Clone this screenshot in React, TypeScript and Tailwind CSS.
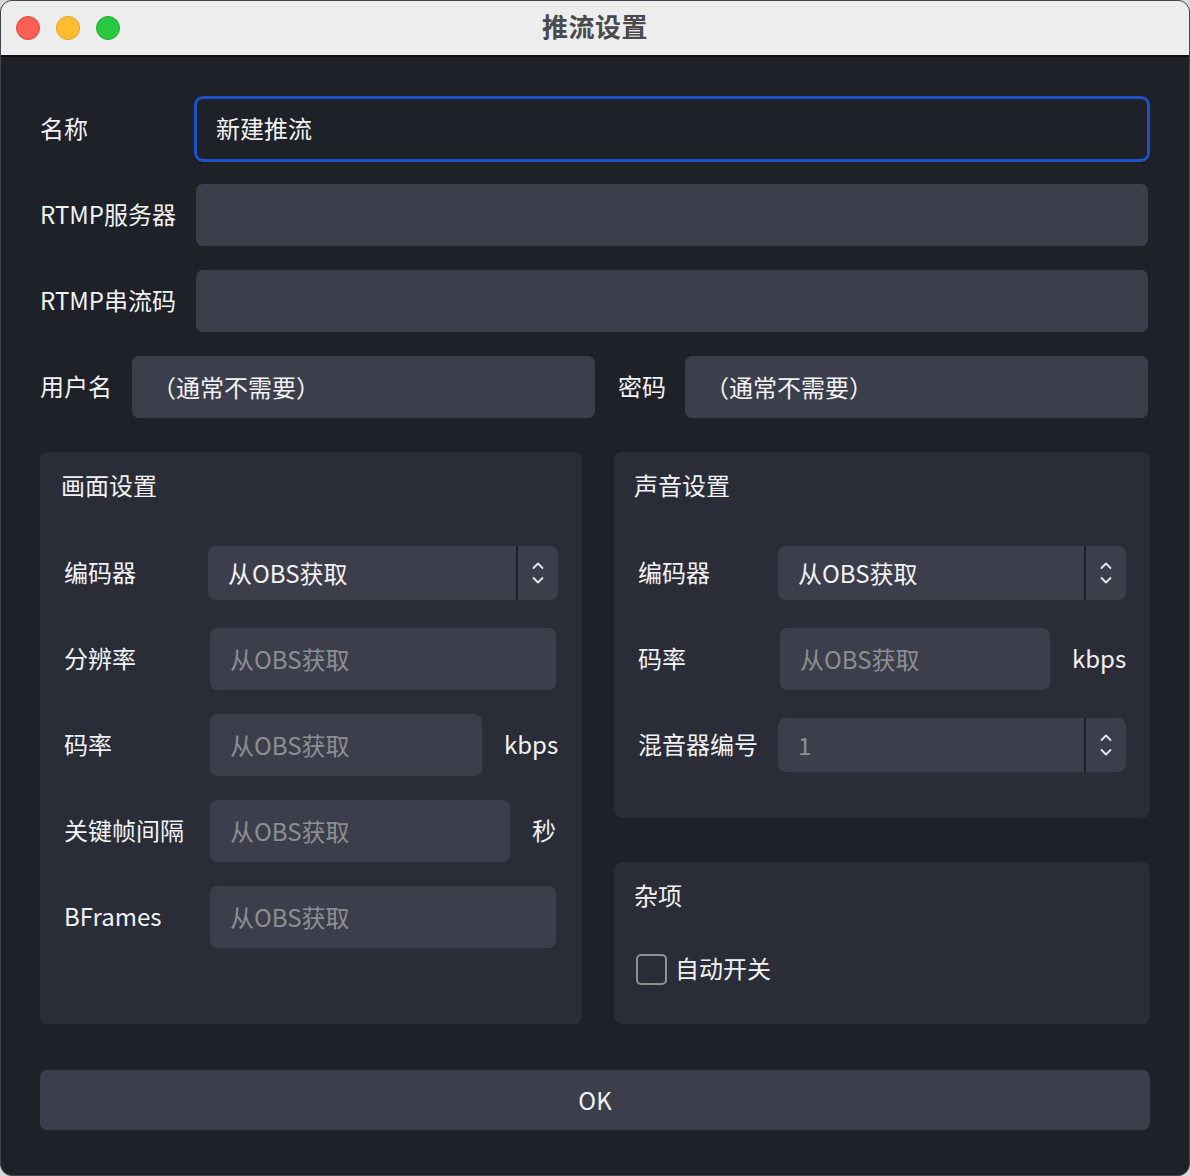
import React from "react";

const FONT = { fontFamily: '"Noto Sans CJK SC", "Noto Sans", sans-serif' };

function Chevrons() {
  return (
    <svg width="14" height="26" viewBox="0 0 14 26" fill="none" stroke="#e8e8ea" strokeWidth="1.8" strokeLinecap="round" strokeLinejoin="round">
      <polyline points="2.5,8 7,3.5 11.5,8" />
      <polyline points="2.5,18 7,22.5 11.5,18" />
    </svg>
  );
}

function Field({ text, placeholder, className = "" }: { text?: string; placeholder?: string; className?: string }) {
  return (
    <div className={`h-[62px] rounded-[7px] bg-[#3c3f4b] flex items-center pl-[20px] ${className}`}>
      {text ? (
        <span className="text-[#f2f2f4]">{text}</span>
      ) : placeholder ? (
        <span className="text-[#8d8e94]">{placeholder}</span>
      ) : null}
    </div>
  );
}

function Combo({ text, muted }: { text: string; muted?: boolean }) {
  return (
    <div className="h-[54px] -mx-[2px] flex-1 rounded-[8px] bg-[#3c3f4b] flex items-stretch">
      <div className={`flex-1 flex items-center pl-[20px] ${muted ? "text-[#8d8e94]" : "text-[#f2f2f4]"}`}>{text}</div>
      <div className="w-[2px] bg-[#1c1e25]" />
      <div className="w-[40px] flex items-center justify-center">
        <Chevrons />
      </div>
    </div>
  );
}

function Light({ fill, ring }: { fill: string; ring: string }) {
  return <div className={`w-[24px] h-[24px] rounded-full border ${fill} ${ring}`} />;
}

export default function App() {
  return (
    <div className="w-[1190px] h-[1176px] bg-[#d9d9d9]" style={FONT}>
      <div className="w-full h-full rounded-[12px] overflow-hidden border border-[#43454c] bg-[#1f2129] flex flex-col text-[24px] leading-[32px] text-[#f2f2f4]">
        {/* title bar */}
        <div className="h-[56px] shrink-0 bg-[#ededed] border-b-2 border-[#0d0e12] grid grid-cols-[1fr_auto_1fr] items-center">
          <div className="flex items-center gap-[16px] pl-[15px]">
            <Light fill="bg-[#fe5f57]" ring="border-[#e2463f]" />
            <Light fill="bg-[#febc2e]" ring="border-[#e0a127]" />
            <Light fill="bg-[#28c840]" ring="border-[#1dad2b]" />
          </div>
          <div className="text-[26px] leading-[32px] mb-[5px] font-bold text-[#4a4a4a] tracking-[0.5px]">推流设置</div>
          <div />
        </div>

        {/* form */}
        <div className="flex-1 flex flex-col px-[39px] pt-[41px]">
          <div className="flex flex-col gap-[24px] pr-[2px]">
            <div className="flex items-center">
              <div className="w-[156px] mb-[3px]">名称</div>
              <div className="flex-1 h-[62px] rounded-[7px] bg-[#1f2129] outline-[3px] outline-solid outline-[#1f52c6] -outline-offset-1 flex items-center pl-[20px]">
                <span className="mb-[3px]">新建推流</span>
              </div>
            </div>
            <div className="flex items-center">
              <div className="w-[156px] mb-[3px]">RTMP服务器</div>
              <Field className="flex-1" />
            </div>
            <div className="flex items-center">
              <div className="w-[156px] mb-[3px]">RTMP串流码</div>
              <Field className="flex-1" />
            </div>
            <div className="flex items-center">
              <div className="w-[92px] mb-[3px]">用户名</div>
              <Field className="flex-1" text="（通常不需要）" />
              <div className="w-[67px] ml-[23px] mb-[3px]">密码</div>
              <Field className="flex-1" text="（通常不需要）" />
            </div>
          </div>

          <div className="mt-[34px] flex gap-[32px]">
            {/* video */}
            <div className="w-[542px] h-[572px] rounded-[8px] bg-[#2a2d38] flex flex-col">
              <div className="pt-[17px] pl-[21px]">画面设置</div>
              <div className="mt-[41px] flex flex-col gap-[24px] pl-[24px] pr-[26px]">
                <div className="h-[62px] flex items-center">
                  <div className="w-[146px] mb-[3px]">编码器</div>
                  <Combo text="从OBS获取" />
                </div>
                <div className="flex items-center">
                  <div className="w-[146px] mb-[3px]">分辨率</div>
                  <Field className="flex-1" placeholder="从OBS获取" />
                </div>
                <div className="flex items-center">
                  <div className="w-[146px] mb-[3px]">码率</div>
                  <Field className="flex-1" placeholder="从OBS获取" />
                  <div className="ml-[22px] w-[52px] text-right mb-[3px]">kbps</div>
                </div>
                <div className="flex items-center">
                  <div className="w-[146px] mb-[3px]">关键帧间隔</div>
                  <Field className="flex-1" placeholder="从OBS获取" />
                  <div className="ml-[22px] mb-[3px]">秒</div>
                </div>
                <div className="flex items-center">
                  <div className="w-[146px] mb-[3px]">BFrames</div>
                  <Field className="flex-1" placeholder="从OBS获取" />
                </div>
              </div>
            </div>

            <div className="w-[536px] flex flex-col gap-[44px]">
              {/* audio */}
              <div className="h-[366px] rounded-[8px] bg-[#2a2d38] flex flex-col">
                <div className="pt-[17px] pl-[20px]">声音设置</div>
                <div className="mt-[41px] flex flex-col gap-[24px] pl-[24px] pr-[26px]">
                  <div className="h-[62px] flex items-center">
                    <div className="w-[142px] mb-[3px]">编码器</div>
                    <Combo text="从OBS获取" />
                  </div>
                  <div className="flex items-center">
                    <div className="w-[142px] mb-[3px]">码率</div>
                    <Field className="flex-1" placeholder="从OBS获取" />
                    <div className="ml-[22px] w-[52px] text-right mb-[3px]">kbps</div>
                  </div>
                  <div className="h-[62px] flex items-center">
                    <div className="w-[142px] mb-[3px]">混音器编号</div>
                    <Combo text="1" muted />
                  </div>
                </div>
              </div>

              {/* misc */}
              <div className="h-[162px] rounded-[8px] bg-[#2a2d38] flex flex-col">
                <div className="pt-[17px] pl-[20px]">杂项</div>
                <label className="mt-[41px] ml-[22px] flex items-center gap-[8px]">
                  <span className="w-[31px] h-[31px] rounded-[5px] border-2 border-[#8f9095] bg-[#2a2d38]" />
                  <span className="mb-[2px]">自动开关</span>
                </label>
              </div>
            </div>
          </div>

          <button className="mt-[46px] h-[60px] w-full rounded-[7px] bg-[#3c3f4b] text-[#f2f2f4] text-[24px]">
            OK
          </button>
        </div>
      </div>
    </div>
  );
}
